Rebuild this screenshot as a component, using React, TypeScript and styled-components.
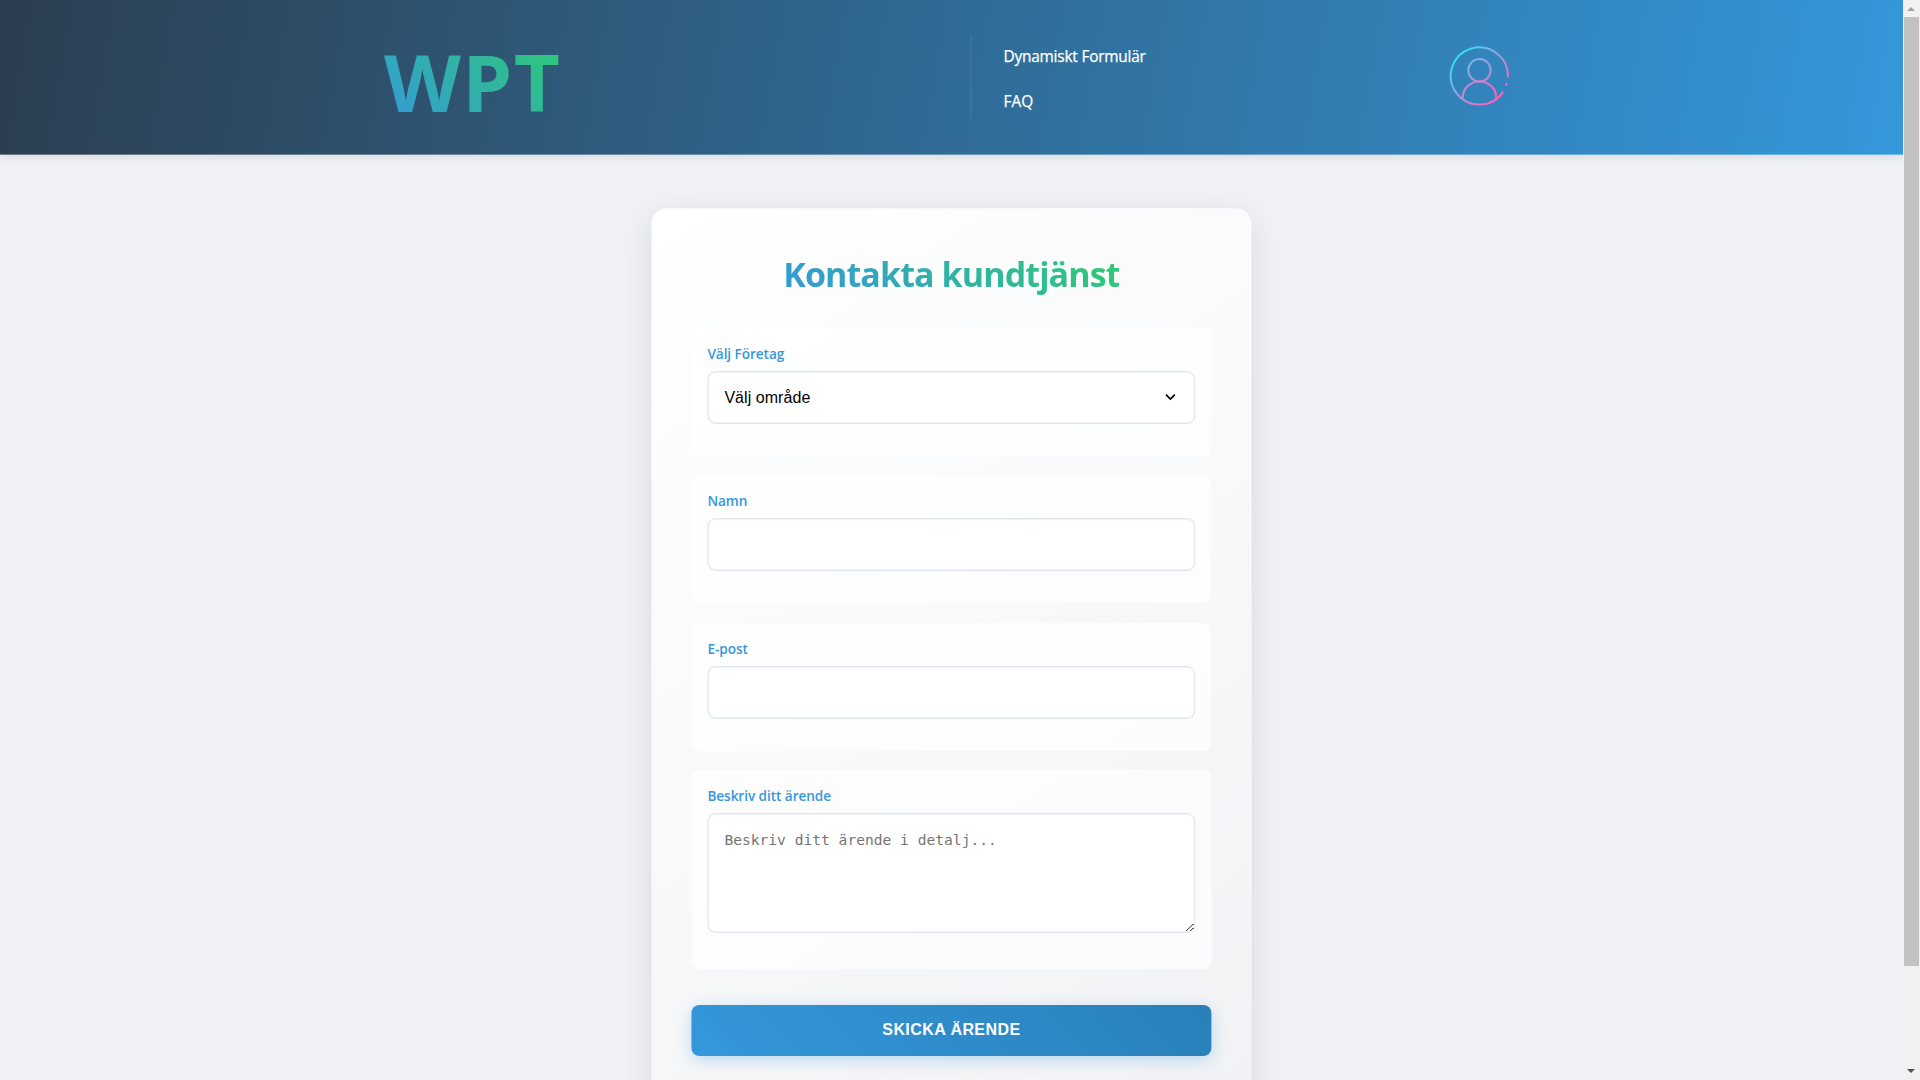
import React from "react";
import styled, { createGlobalStyle } from "styled-components";

const GlobalStyle = createGlobalStyle`
  * { box-sizing: border-box; }
  body { margin: 0; overflow: hidden; background: #f0f2f6; font-family: "Open Sans", "Noto Sans", sans-serif; }
`;

const Shell = styled.div`
  display: flex;
  width: 1920px;
  height: 1080px;
  overflow: hidden;
`;

const Page = styled.div`
  flex: 1;
  min-width: 0;
  display: flex;
  flex-direction: column;
  align-items: center;
  background: #f0f2f6;
`;

const Header = styled.header`
  flex: none;
  align-self: stretch;
  height: 155px;
  display: grid;
  grid-template-columns: 970px 479px 1fr;
  align-items: center;
  background: linear-gradient(100deg, #2c3e50, #3498db);
  border-bottom: 1px solid rgba(255, 255, 255, 0.3);
  box-shadow: 0 2px 10px rgba(0, 0, 0, 0.1);
`;

const Logo = styled.div`
  justify-self: start;
  margin: 7px 0 0 384px;
  font-size: 79.6px;
  line-height: 106px;
  font-weight: 700;
  letter-spacing: 1.4px;
  color: transparent;
  background: linear-gradient(45deg, #3498db, #2ecc71);
  background-clip: text;
`;

const Nav = styled.nav`
  height: 83px;
  padding: 2px 0 0 31.5px;
  border-left: 2px solid rgba(255, 255, 255, 0.05);
  display: flex;
  flex-direction: column;
  gap: 7px;
`;

const NavLink = styled.a<{ $track: number }>`
  color: #fff;
  font-size: 15.4px;
  line-height: 38px;
  letter-spacing: ${(p) => p.$track}px;
  -webkit-text-stroke: 0.25px #fff;
  white-space: nowrap;
`;

const Card = styled.main`
  flex: none;
  width: 600px;
  height: 920px;
  margin: 53px 1px 0 0;
  padding: 39px 39px;
  border: 1px solid rgba(255, 255, 255, 0.4);
  border-radius: 16px;
  background: linear-gradient(145deg, #ffffff, #f0f2f5);
  box-shadow: 0 8px 32px rgba(31, 45, 61, 0.12);
  transform: translateX(0.4px);
  display: flex;
  flex-direction: column;
`;

const Title = styled.h1`
  align-self: center;
  margin: 2px 0 29.5px;
  font-size: 34px;
  line-height: 48px;
  font-weight: 700;
  letter-spacing: -0.9px;
  white-space: nowrap;
  color: transparent;
  background: linear-gradient(45deg, #3498db, #2ecc71);
  background-clip: text;
`;

const Group = styled.section<{ $height: number }>`
  flex: none;
  height: ${(p) => p.$height}px;
  margin-bottom: 19.2px;
  padding: 16px;
  border-radius: 8px;
  background: rgba(255, 255, 255, 0.7);
  display: flex;
  flex-direction: column;
`;

const Label = styled.label`
  align-self: flex-start;
  height: 19px;
  margin-bottom: 8px;
  color: #3498db;
  font-size: 13.6px;
  line-height: 20px;
  font-weight: 600;
  letter-spacing: -0.06px;
`;

const fieldBox = `
  width: 100%;
  border: 1px solid #dfe5ef;
  border-radius: 8px;
  background: #fff;
  box-shadow: inset 0 0 0 1px rgba(223, 229, 239, 0.5);
  outline: none;
`;

const Input = styled.input`
  ${fieldBox}
  height: 53px;
  padding: 0 16px;
`;

const SelectWrap = styled.div`
  position: relative;
  display: flex;
`;

const Select = styled.select`
  ${fieldBox}
  appearance: none;
  height: 53px;
  padding: 0 16px;
  font: 16px "Liberation Sans", Arial, sans-serif;
  letter-spacing: 0.05px;
  color: #000;
`;

const Chevron = styled.svg`
  position: absolute;
  top: 22px;
  right: 19px;
  width: 12px;
  height: 8px;
  pointer-events: none;
`;

const TextArea = styled.textarea`
  ${fieldBox}
  height: 120px;
  padding: 16px;
  font: 14.6px/19px "DejaVu Sans Mono", monospace;
  resize: vertical;
  &::placeholder { color: #757575; }
`;

const Submit = styled.button`
  flex: none;
  height: 51px;
  margin-top: 16.1px;
  border: 0;
  border-radius: 8px;
  color: #fff;
  font: 700 16px "Liberation Sans", Arial, sans-serif;
  letter-spacing: 0.42px;
  background: linear-gradient(45deg, #3498db, #2980b9);
  box-shadow: 0 4px 15px rgba(52, 152, 219, 0.3);
`;

const ScrollBar = styled.aside`
  flex: none;
  width: 17px;
  padding: 7px 0 7px 1px;
  background: #f1f1f1;
  display: flex;
  flex-direction: column;
`;

const Arrow = styled.svg`
  display: block;
  flex: none;
  width: 15px;
  height: 4px;
`;

const Thumb = styled.div`
  width: 15px;
  height: 949px;
  margin: 6px 0 auto;
  background: #c1c1c1;
`;

const Avatar = styled.svg`
  display: block;
  width: 60px;
  height: 60px;
  margin-bottom: 3px;
`;

function UserIcon() {
  return (
    <Avatar viewBox="0 0 60 60" fill="none">
      <defs>
        <linearGradient id="ring" gradientUnits="userSpaceOnUse" x1="10" y1="10" x2="50" y2="50">
          <stop offset="0" stopColor="#35dcfb" />
          <stop offset="1" stopColor="#ff5fbd" />
        </linearGradient>
        <linearGradient id="person" gradientUnits="userSpaceOnUse" x1="15" y1="5" x2="44" y2="50">
          <stop offset="0" stopColor="#4fd0f6" />
          <stop offset="1" stopColor="#ff5fbd" />
        </linearGradient>
      </defs>
      <g stroke="url(#ring)" strokeWidth="2">
        <path d="M58.9 31.5A28.6 28.6 0 1 0 54.3 45.6" />
        <path d="M57.5 37.8l-.3 1.1" strokeWidth="2.2" strokeLinecap="round" />
      </g>
      <g stroke="url(#person)" strokeWidth="2">
        <circle cx="30.5" cy="24.3" r="11.2" />
        <path d="M13.9 52.5V51A16.6 15.6 0 0 1 47.1 51v1.5" />
      </g>
    </Avatar>
  );
}

export default function App() {
  return (
    <Shell>
      <GlobalStyle />
      <Page>
        <Header>
          <Logo>WPT</Logo>
          <Nav>
            <NavLink $track={-0.2}>Dynamiskt Formulär</NavLink>
            <NavLink $track={0}>FAQ</NavLink>
          </Nav>
          <UserIcon />
        </Header>
        <Card>
          <Title>Kontakta kundtjänst</Title>
          <Group $height={128.4}>
            <Label htmlFor="company">Välj Företag</Label>
            <SelectWrap>
              <Select id="company">
                <option>Välj område</option>
              </Select>
              <Chevron viewBox="0 0 12 8">
                <path d="M1.6 1.6L6 6L10.4 1.6" fill="none" stroke="#000" strokeWidth="1.6" />
              </Chevron>
            </SelectWrap>
          </Group>
          <Group $height={128.4}>
            <Label htmlFor="name">Namn</Label>
            <Input id="name" />
          </Group>
          <Group $height={128.4}>
            <Label htmlFor="email">E-post</Label>
            <Input id="email" type="email" />
          </Group>
          <Group $height={199}>
            <Label htmlFor="message">Beskriv ditt ärende</Label>
            <TextArea id="message" placeholder="Beskriv ditt ärende i detalj..." />
          </Group>
          <Submit>SKICKA ÄRENDE</Submit>
        </Card>
      </Page>
      <ScrollBar>
        <Arrow viewBox="0 0 15 4"><path d="M3 4L7 0L11 4Z" fill="#a3a3a3" /></Arrow>
        <Thumb />
        <Arrow viewBox="0 0 15 4"><path d="M3 0L7 4L11 0Z" fill="#505050" /></Arrow>
      </ScrollBar>
    </Shell>
  );
}
